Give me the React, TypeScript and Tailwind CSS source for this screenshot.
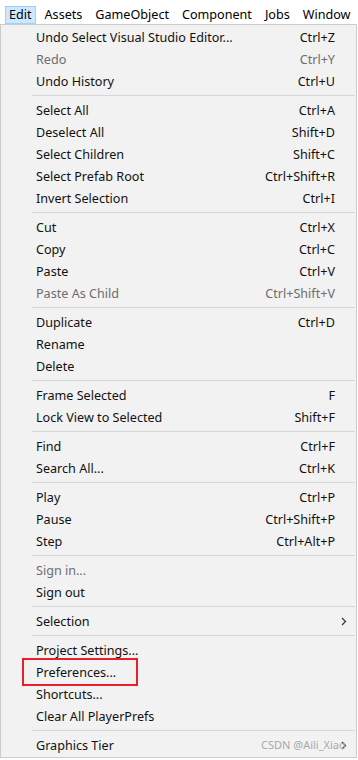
type Item = { label: string; key?: string; disabled?: boolean; sub?: boolean; boxed?: boolean };

const groups: Item[][] = [
  [
    { label: "Undo Select Visual Studio Editor...", key: "Ctrl+Z" },
    { label: "Redo", key: "Ctrl+Y", disabled: true },
    { label: "Undo History", key: "Ctrl+U" },
  ],
  [
    { label: "Select All", key: "Ctrl+A" },
    { label: "Deselect All", key: "Shift+D" },
    { label: "Select Children", key: "Shift+C" },
    { label: "Select Prefab Root", key: "Ctrl+Shift+R" },
    { label: "Invert Selection", key: "Ctrl+I" },
  ],
  [
    { label: "Cut", key: "Ctrl+X" },
    { label: "Copy", key: "Ctrl+C" },
    { label: "Paste", key: "Ctrl+V" },
    { label: "Paste As Child", key: "Ctrl+Shift+V", disabled: true },
  ],
  [
    { label: "Duplicate", key: "Ctrl+D" },
    { label: "Rename" },
    { label: "Delete" },
  ],
  [
    { label: "Frame Selected", key: "F" },
    { label: "Lock View to Selected", key: "Shift+F" },
  ],
  [
    { label: "Find", key: "Ctrl+F" },
    { label: "Search All...", key: "Ctrl+K" },
  ],
  [
    { label: "Play", key: "Ctrl+P" },
    { label: "Pause", key: "Ctrl+Shift+P" },
    { label: "Step", key: "Ctrl+Alt+P" },
  ],
  [
    { label: "Sign in...", disabled: true },
    { label: "Sign out" },
  ],
  [{ label: "Selection", sub: true }],
  [
    { label: "Project Settings..." },
    { label: "Preferences...", boxed: true },
    { label: "Shortcuts..." },
    { label: "Clear All PlayerPrefs" },
  ],
  [{ label: "Graphics Tier", sub: true }],
];

const menus = ["Edit", "Assets", "GameObject", "Component", "Jobs", "Window"];

function Row({ item }: { item: Item }) {
  return (
    <div
      className={`relative h-[22px] flex items-center justify-between pt-[2px] pl-[35px] pr-[21px] ${
        item.disabled ? "text-[#6d6d6d]" : "text-[#111]"
      }`}
    >
      <span>{item.label}</span>
      {item.key && <span>{item.key}</span>}
      {item.sub && (
        <svg className="absolute right-[9px] top-[7px]" width="6" height="9" viewBox="0 0 6 9">
          <path d="M1 1 L4.5 4.5 L1 8" fill="none" stroke="#333" strokeWidth="1.2" />
        </svg>
      )}
      {item.boxed && (
        <div className="absolute left-[21px] top-[-3px] w-[116px] h-[28px] border-2 border-[#e8202a]" />
      )}
    </div>
  );
}

export default function App() {
  return (
    <div
      className="w-[358px] h-[760px] bg-white overflow-hidden relative text-[12.6px]"
      style={{ fontFamily: '"Noto Sans", "Microsoft YaHei", sans-serif' }}
    >
      <div className="h-[24px] flex items-end pl-[5px]">
        {menus.map((m, i) => (
          <div
            key={m}
            className={`h-[18px] flex items-center px-[3px] mr-[5px] pt-[1px] leading-none whitespace-nowrap ${
              i === 0 ? "bg-[#cce8ff] border border-[#99d1ff]" : "border border-transparent"
            }`}
          >
            {m}
          </div>
        ))}
      </div>
      <div className="w-[357px] bg-[#f2f2f2] border border-[#cccccc] pt-[1px] pb-[1px]">
        {groups.map((g, gi) => (
          <div key={gi}>
            {gi > 0 && (
              <div className="h-[7px] flex items-center pl-[31px] pr-[1px]">
                <div className="h-[1px] w-full bg-[#d7d7d7]" />
              </div>
            )}
            {g.map((it) => (
              <Row key={it.label} item={it} />
            ))}
          </div>
        ))}
      </div>
      <div className="absolute left-[261px] top-[738px] text-[11px] text-[#a8a8a8] leading-[14px]">
        CSDN @Aili_Xiao
      </div>
    </div>
  );
}
